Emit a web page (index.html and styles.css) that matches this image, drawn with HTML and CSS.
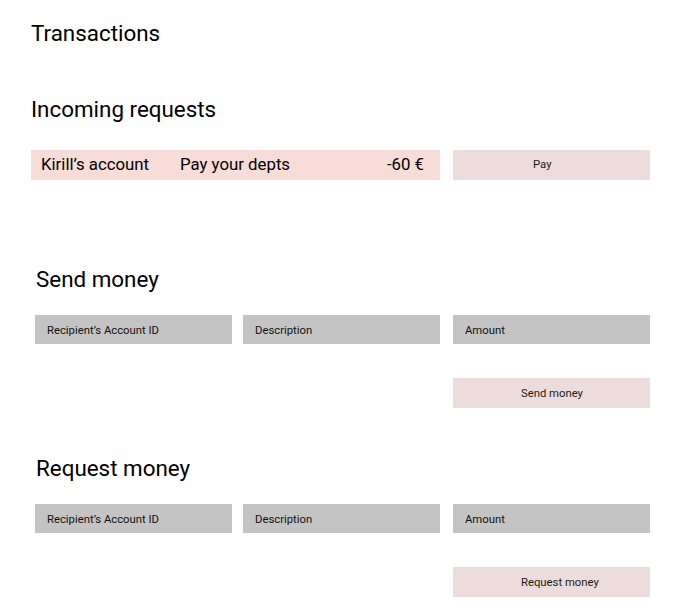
FILE: index.html
```html
<!DOCTYPE html>
<html>
<head>
<meta charset="utf-8">
<link rel="stylesheet" href="styles.css">
</head>
<body>
<main class="page">
  <h1 class="title">Transactions</h1>
  <h2 class="section-title">Incoming requests</h2>
  <div class="request-line">
    <div class="request-info">
      <span class="req-from">Kirill’s account</span>
      <span class="req-desc">Pay your depts</span>
      <span class="req-amount">-60 €</span>
    </div>
    <button class="btn btn-pay">Pay</button>
  </div>

  <section class="form-section send">
    <h2 class="section-title">Send money</h2>
    <div class="fields">
      <div class="field">Recipient’s Account ID</div>
      <div class="field">Description</div>
      <div class="field field-last">Amount</div>
    </div>
    <div class="actions">
      <button class="btn btn-action">Send money</button>
    </div>
  </section>

  <section class="form-section request">
    <h2 class="section-title">Request money</h2>
    <div class="fields">
      <div class="field">Recipient’s Account ID</div>
      <div class="field">Description</div>
      <div class="field field-last">Amount</div>
    </div>
    <div class="actions">
      <button class="btn btn-action">Request money</button>
    </div>
  </section>
</main>
</body>
</html>
```

FILE: styles.css
```css
* { box-sizing: border-box; }
html, body { margin: 0; padding: 0; background: #fff; }
body {
  font-family: Roboto, "Liberation Sans", sans-serif;
  color: #000;
}
.page {
  padding: 20px 0 0 31px;
}
.title, .section-title {
  margin: 0;
  font-size: 22.4px;
  font-weight: 400;
  line-height: 26px;
}
.page > .section-title {
  margin-top: 50px;
}
.request-line {
  display: flex;
  margin-top: 28px;
  height: 30px;
}
.request-info {
  width: 409px;
  height: 30px;
  background: #f7dcd7;
  display: flex;
  align-items: center;
  padding: 0 16px 2px 10px;
  font-size: 16.8px;
}
.req-from { width: 139px; }
.req-desc { flex: 1; }
.btn {
  font-family: Roboto, "Liberation Sans", sans-serif;
  border: 0;
  margin: 0;
  background: #ecdcdc;
  color: #1a1a1a;
  font-size: 11.3px;
  height: 30px;
  width: 197px;
  text-align: left;
  padding: 0;
}
.btn-pay {
  margin-left: 13px;
  padding-left: 80px;
  padding-bottom: 2px;
}
.form-section {
  padding-left: 4px;
}
.send { margin-top: 86px; }
.request { margin-top: 47px; }
.form-section .section-title {
  padding-left: 1px;
}
.fields {
  display: flex;
  gap: 11px;
  margin-top: 23px;
}
.field {
  width: 197px;
  height: 29px;
  background: #c4c4c4;
  font-size: 11.3px;
  color: #111;
  display: flex;
  align-items: center;
  padding: 1px 0 0 12px;
}
.field-last { margin-left: 2px; }
.actions {
  display: flex;
  justify-content: flex-end;
  width: 615px;
  margin-top: 34px;
}
.btn-action {
  padding-left: 68px;
}
```
